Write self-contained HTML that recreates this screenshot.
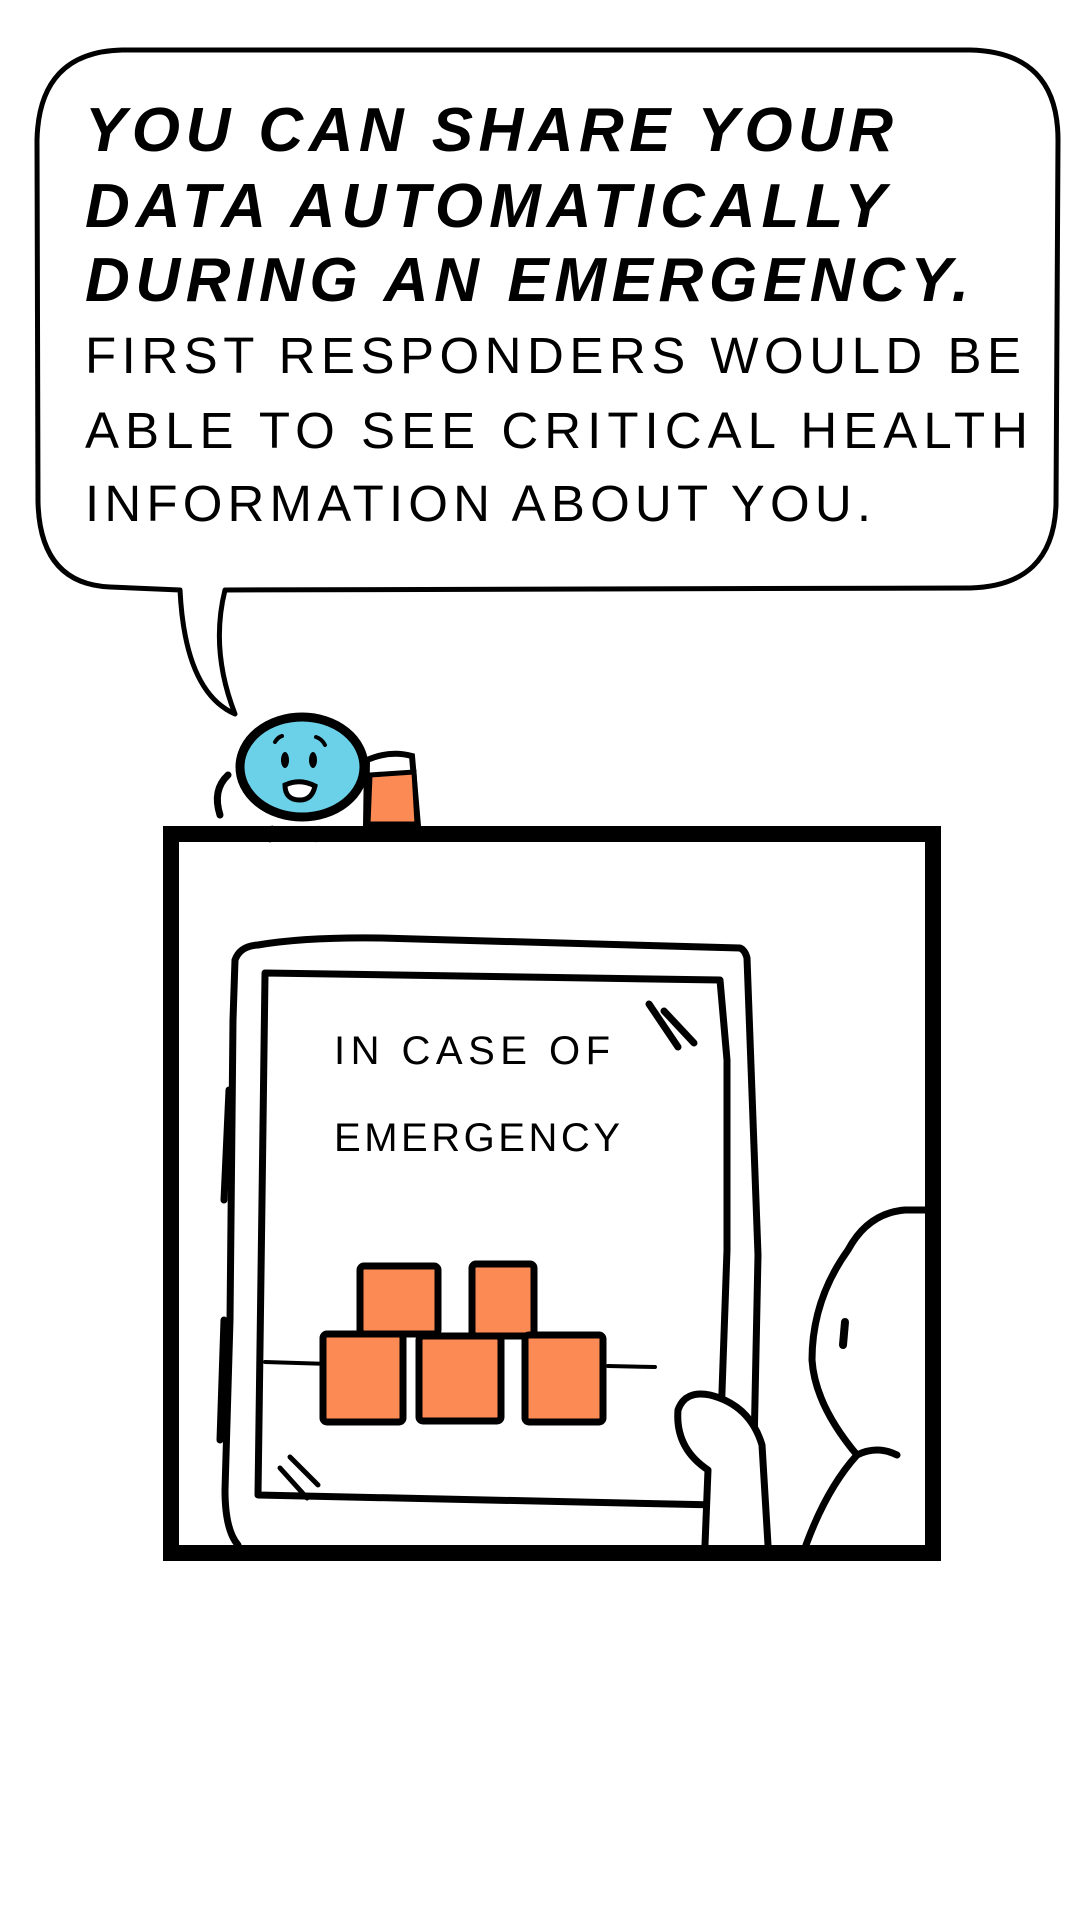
<!DOCTYPE html>
<html><head><meta charset="utf-8"><style>
html,body{margin:0;padding:0;background:#fff;width:1080px;height:1920px;overflow:hidden}
svg{display:block}
.h{font-family:"Liberation Sans",sans-serif;font-weight:900;font-style:italic;font-size:62px}
.b{font-family:"Liberation Sans",sans-serif;font-size:51px}
.s{font-family:"Liberation Sans",sans-serif;font-size:40px}
</style></head><body>
<svg width="1080" height="1920" viewBox="0 0 1080 1920" xmlns="http://www.w3.org/2000/svg">
<g fill="none" stroke="#000" stroke-width="5" stroke-linejoin="round" stroke-linecap="round">
<path d="M122,50 L970,50 Q1058,52 1058,140 L1056,505 Q1053,586 970,588 L225,590 Q210,650 235,714 Q185,692 180,590 L110,587 Q40,584 38,502 L37,140 Q39,52 122,50 Z" fill="#fff"/>
</g>
<text class="h" x="85" y="151" textLength="808" lengthAdjust="spacing">YOU CAN SHARE YOUR</text>
<text class="h" x="85" y="227" textLength="801" lengthAdjust="spacing">DATA AUTOMATICALLY</text>
<text class="h" x="85" y="301" textLength="884" lengthAdjust="spacing">DURING AN EMERGENCY.</text>
<text class="b" x="85" y="373" textLength="936" lengthAdjust="spacing">FIRST RESPONDERS WOULD BE</text>
<text class="b" x="85" y="448" textLength="943" lengthAdjust="spacing">ABLE TO SEE CRITICAL HEALTH</text>
<text class="b" x="85" y="521" textLength="786" lengthAdjust="spacing">INFORMATION ABOUT YOU.</text>
<!-- cup -->
<path d="M367,760 Q390,750 412,756 L418,826 L366,826 Z" fill="#fff" stroke="#000" stroke-width="6"/>
<path d="M370,775 L414,772 L417,824 L368,824 Z" fill="#fc8a54" stroke="#000" stroke-width="5"/>
<!-- character -->
<path d="M228,775 Q212,790 220,815" fill="none" stroke="#000" stroke-width="7" stroke-linecap="round"/>
<ellipse cx="302" cy="767" rx="62" ry="50" fill="#6bd1e8" stroke="#000" stroke-width="9"/>
<path d="M275,742 Q278,737 282,736 M316,737 Q322,739 325,745" stroke="#000" stroke-width="4" fill="none" stroke-linecap="round"/>
<ellipse cx="285" cy="760" rx="4" ry="8" fill="#000"/><ellipse cx="313" cy="760" rx="4" ry="8" fill="#000"/>
<path d="M285,785 Q300,778 315,786 Q312,800 300,800 Q285,800 285,785 Z" fill="#fff" stroke="#000" stroke-width="5"/>
<!-- frame -->
<rect x="171" y="834" width="762" height="719" fill="none" stroke="#000" stroke-width="16"/>
<path d="M270,826 L272,842 M317,826 L318,842" stroke="#000" stroke-width="6"/>
<!-- tablet -->
<g fill="none" stroke="#000" stroke-width="7" stroke-linecap="round" stroke-linejoin="round">
<path d="M258,945 Q305,937 380,938 L740,948 Q745,950 747,958 L758,1255 L752,1545 M238,1545 Q225,1530 225,1490 L230,1320 L233,1020 L235,960 Q240,946 258,945"/>
<path d="M265,973 L720,980 L727,1060 L727,1250 L718,1505 L258,1495 L262,1200 L265,975 Z" fill="#fff"/>
<path d="M229,1090 L224,1200 M224,1320 L220,1440"/>
<path d="M649,1004 L678,1047 M664,1011 L694,1043"/>
<path d="M280,1468 L307,1498 M290,1457 L318,1485" stroke-width="5"/>
<path d="M265,1362 L330,1364 M425,1364 L470,1364 M608,1366 L655,1367" stroke-width="4"/>
</g>
<text class="s" x="334" y="1064" textLength="276" lengthAdjust="spacing">IN CASE OF</text>
<text class="s" x="334" y="1151" textLength="286" lengthAdjust="spacing">EMERGENCY</text>
<g fill="#fc8a54" stroke="#000" stroke-width="7" stroke-linejoin="round">
<rect x="360" y="1266" width="78" height="68" rx="4"/>
<rect x="472" y="1264" width="62" height="72" rx="4"/>
<rect x="323" y="1334" width="80" height="88" rx="4"/>
<rect x="419" y="1336" width="82" height="85" rx="4"/>
<rect x="525" y="1335" width="78" height="87" rx="4"/>
</g>
<!-- hand and person -->
<g fill="#fff" stroke="#000" stroke-width="7" stroke-linecap="round" stroke-linejoin="round">
<path d="M705,1545 L708,1470 Q675,1448 678,1410 Q685,1390 710,1395 Q750,1405 762,1445 L768,1545"/>
<path d="M925,1210 L905,1210 Q868,1213 848,1250 Q812,1300 812,1360 Q815,1405 857,1455 Q827,1488 806,1545"/>
<path d="M857,1455 Q877,1445 897,1455"/>
</g>
<path d="M845,1322 L843,1345" stroke="#000" stroke-width="8" stroke-linecap="round"/>
</svg>
</body></html>
